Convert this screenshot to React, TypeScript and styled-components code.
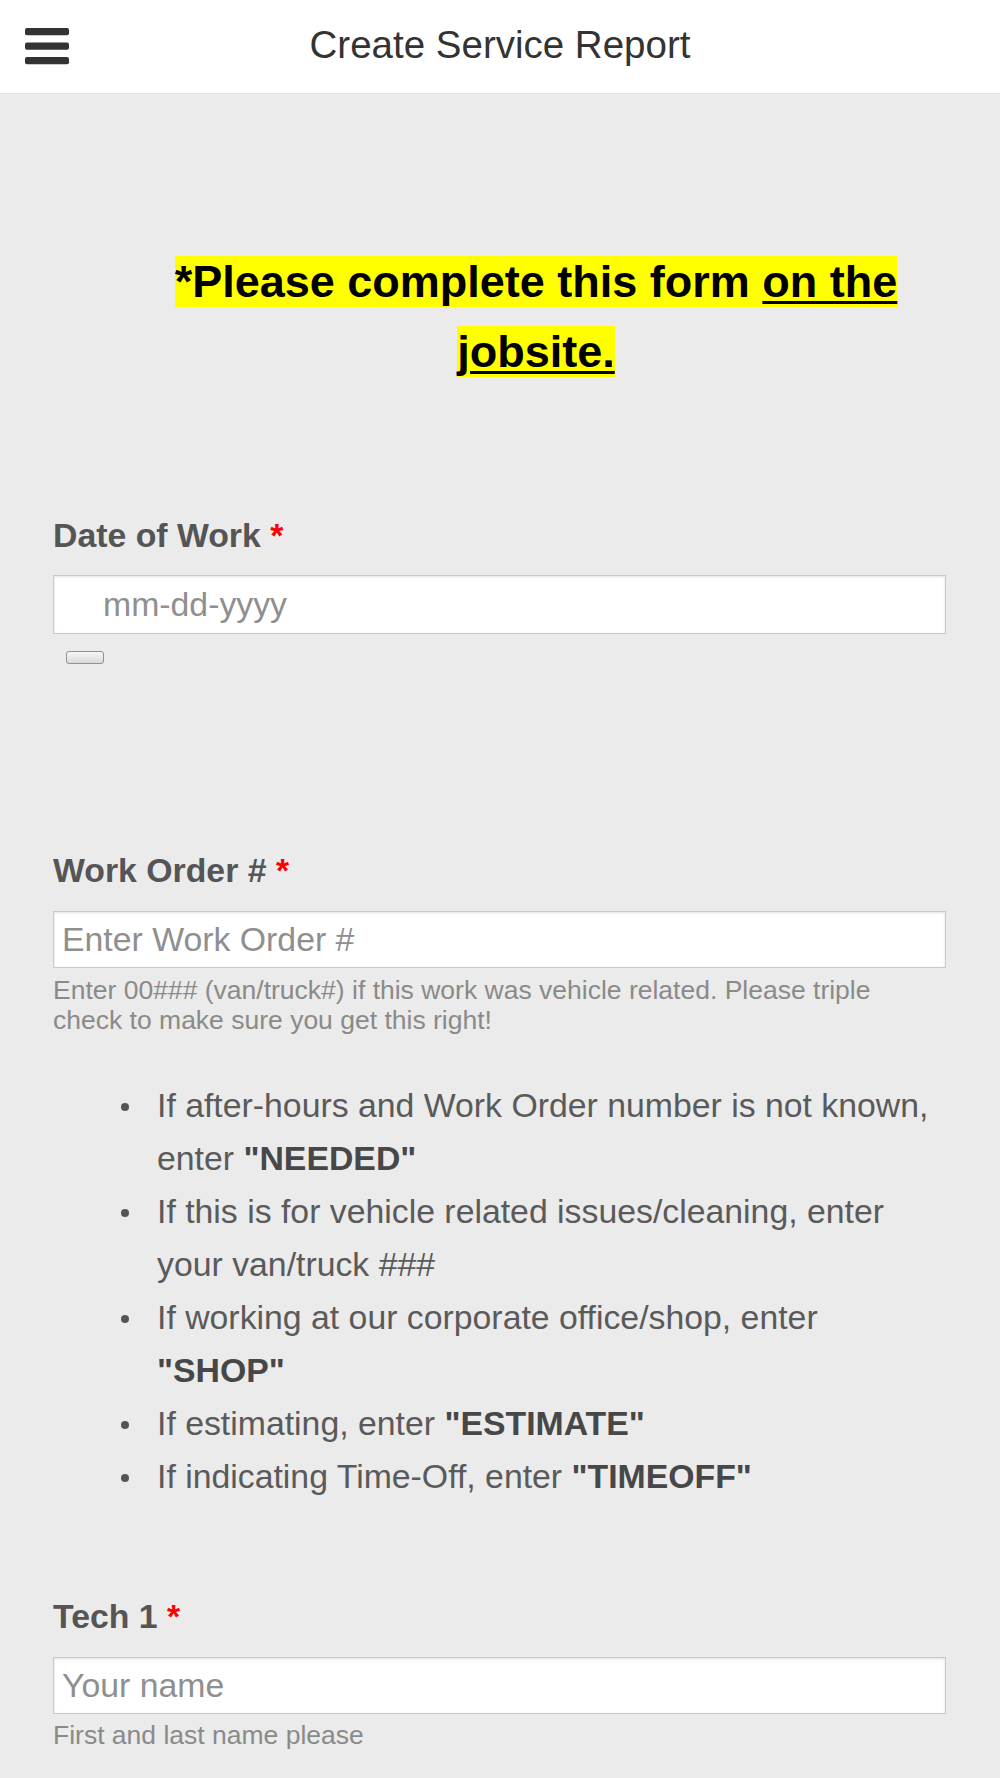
import React from "react";
import styled, { createGlobalStyle } from "styled-components";

const GlobalStyle = createGlobalStyle`
  html, body {
    margin: 0;
    padding: 0;
    background: #ebebeb;
  }
  body {
    font-family: "Liberation Sans", Arial, sans-serif;
    color: #555;
  }
  * { box-sizing: border-box; }
`;

const Header = styled.header`
  display: grid;
  grid-template-columns: 1fr auto 1fr;
  align-items: center;
  height: 94px;
  padding: 0 25px;
  background: #ffffff;
  border-bottom: 1px solid #e2e2e2;
`;

const MenuButton = styled.button`
  justify-self: start;
  display: flex;
  padding: 0;
  border: 0;
  background: transparent;
  cursor: pointer;
`;

const Title = styled.h1`
  margin: 0 0 4px;
  font-family: "Liberation Sans", Arial, sans-serif;
  font-weight: 400;
  font-size: 38.5px;
  line-height: 44px;
  color: #333;
`;

const Main = styled.main`
  padding: 0 54px 40px 53px;
`;

const Notice = styled.p`
  margin: 153px 0 0 73px;
  text-align: center;
  font-family: "Liberation Sans", Arial, sans-serif;
  font-weight: 700;
  font-size: 45px;
  line-height: 70px;
  color: #000;
`;

const Highlight = styled.span<{ $underline?: boolean }>`
  background: #ffff00;
  text-decoration: ${(p) => (p.$underline ? "underline" : "none")};
  text-decoration-thickness: 3px;
  text-underline-offset: 4px;
`;

const Field = styled.div<{ $top: number }>`
  display: flex;
  flex-direction: column;
  align-items: stretch;
  margin-top: ${(p) => p.$top}px;
`;

const Label = styled.label`
  display: block;
  font-weight: 700;
  font-size: 33.8px;
  line-height: 40px;
  color: #555;
`;

const Required = styled.span`
  color: #ff0000;
`;

const TextInput = styled.input<{ $date?: boolean; $gap?: number }>`
  display: block;
  width: 100%;
  height: ${(p) => (p.$date ? 59 : 57)}px;
  margin-top: ${(p) => p.$gap ?? 21}px;
  padding: 0 0 0 ${(p) => (p.$date ? 49 : 8)}px;
  border: 1px solid #c9c9c9;
  border-radius: 0;
  background: #fff;
  box-shadow: inset 0 1px 3px rgba(0, 0, 0, 0.12);
  font-family: "Liberation Sans", Arial, sans-serif;
  font-size: 33.8px;
  color: #333;
  outline: none;
  &::placeholder {
    color: #8f8f8f;
  }
`;

const PickerButton = styled.button`
  align-self: flex-start;
  width: 38px;
  height: 13px;
  margin: 17px 0 0 13px;
  padding: 0;
  border: 1px solid #929292;
  border-radius: 3px;
  background: linear-gradient(#f7f7f7, #dadada);
`;

const Help = styled.p<{ $gap?: number }>`
  margin: ${(p) => p.$gap ?? 8}px 0 0;
  font-family: "Liberation Sans", Arial, sans-serif;
  font-size: 26.5px;
  line-height: 29.5px;
  color: #8a8a8a;
`;

const Rules = styled.ul`
  margin: 44px 0 0;
  padding-left: 104px;
  list-style: none;
  font-size: 33.8px;
  line-height: 53px;
  color: #5a5a5a;
`;

const Rule = styled.li`
  position: relative;
  &::before {
    content: "";
    position: absolute;
    left: -36px;
    top: 23.5px;
    width: 8px;
    height: 8px;
    border-radius: 50%;
    background: #555;
  }
`;

const Strong = styled.b`
  font-weight: 700;
  color: #474747;
`;

const MenuIcon = () => (
  <svg width="44" height="37" viewBox="0 0 44 37" aria-hidden="true">
    <rect x="0" y="0" width="44" height="7.3" rx="2" fill="#333" />
    <rect x="0" y="14.5" width="44" height="7.3" rx="2" fill="#333" />
    <rect x="0" y="29" width="44" height="7.3" rx="2" fill="#333" />
  </svg>
);

export default function App() {
  return (
    <>
      <GlobalStyle />
      <Header>
        <MenuButton aria-label="Menu">
          <MenuIcon />
        </MenuButton>
        <Title>Create Service Report</Title>
        <span />
      </Header>
      <Main>
        <Notice>
          <Highlight>*Please complete this form </Highlight>
          <Highlight $underline>on the jobsite.</Highlight>
        </Notice>

        <Field $top={128}>
          <Label>
            Date of Work <Required>*</Required>
          </Label>
          <TextInput $date $gap={20} placeholder="mm-dd-yyyy" />
          <PickerButton aria-label="Pick date" />
        </Field>

        <Field $top={186}>
          <Label>
            Work Order # <Required>*</Required>
          </Label>
          <TextInput placeholder="Enter Work Order #" />
          <Help>
            Enter 00### (van/truck#) if this work was vehicle related. Please triple
            check to make sure you get this right!
          </Help>
        </Field>

        <Rules>
          <Rule>
            If after-hours and Work Order number is not known, enter <Strong>"NEEDED"</Strong>
          </Rule>
          <Rule>If this is for vehicle related issues/cleaning, enter your van/truck ###</Rule>
          <Rule>
            If working at our corporate office/shop, enter <Strong>"SHOP"</Strong>
          </Rule>
          <Rule>
            If estimating, enter <Strong>"ESTIMATE"</Strong>
          </Rule>
          <Rule>
            If indicating Time-Off, enter <Strong>"TIMEOFF"</Strong>
          </Rule>
        </Rules>

        <Field $top={93}>
          <Label>
            Tech 1 <Required>*</Required>
          </Label>
          <TextInput placeholder="Your name" />
          <Help $gap={7}>First and last name please</Help>
        </Field>
      </Main>
    </>
  );
}
